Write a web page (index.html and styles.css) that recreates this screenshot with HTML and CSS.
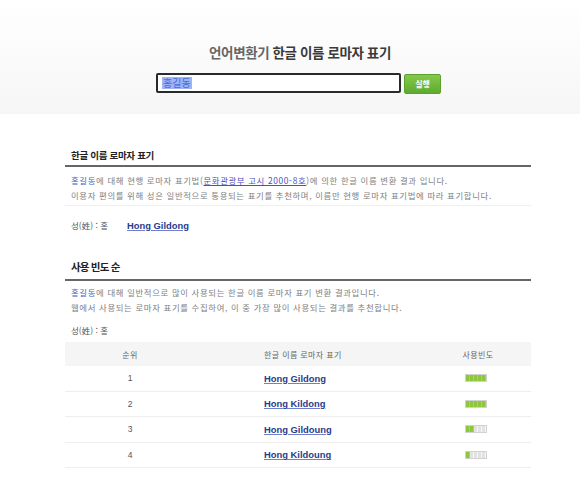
FILE: index.html
```
<!DOCTYPE html>
<html lang="ko">
<head>
<meta charset="utf-8">
<link rel="stylesheet" href="styles.css">
</head>
<body>
<div class="header">
  <div class="wrap">
    <h1 class="title"><span class="title-light">언어변환기</span> 한글 이름 로마자 표기</h1>
    <div class="form">
      <div class="input"><span class="sel">홍길동</span></div>
      <div class="btn">실행</div>
    </div>
  </div>
</div>

<div class="wrap">
  <div class="section s1">
    <h2 class="heading">한글 이름 로마자 표기</h2>
    <div class="para sep">
      <p><span class="hl">홍길동</span>에 대해 현행 로마자 표기법(<a class="ref" href="#">문화관광부 고시 2000-8호</a>)에 의한 한글 이름 변환 결과 입니다.</p>
      <p>이용자 편의를 위해 성은 일반적으로 통용되는 표기를 추천하며, 이름만 현행 로마자 표기법에 따라 표기합니다.</p>
    </div>
    <div class="result"><span class="surname">성(姓) : 홍</span><a class="rname" href="#">Hong Gildong</a></div>
  </div>

  <div class="section s2">
    <h2 class="heading heading2">사용 빈도 순</h2>
    <div class="para">
      <p><span class="hl">홍길동</span>에 대해 일반적으로 많이 사용되는 한글 이름 로마자 표기 변환 결과입니다.</p>
      <p>웹에서 사용되는 로마자 표기를 수집하여, 이 중 가장 많이 사용되는 결과를 추천합니다.</p>
    </div>
    <div class="result r2"><span class="surname">성(姓) : 홍</span></div>

    <div class="table">
      <div class="row thead">
        <div class="c1">순위</div>
        <div class="c2">한글 이름 로마자 표기</div>
        <div class="c3">사용빈도</div>
      </div>
      <div class="row">
        <div class="c1 num">1</div>
        <div class="c2"><a class="rname" href="#">Hong Gildong</a></div>
        <div class="c3"><div class="bar"><div class="fill" style="width:100%"></div></div></div>
      </div>
      <div class="row">
        <div class="c1 num">2</div>
        <div class="c2"><a class="rname" href="#">Hong Kildong</a></div>
        <div class="c3"><div class="bar"><div class="fill" style="width:100%"></div></div></div>
      </div>
      <div class="row">
        <div class="c1 num">3</div>
        <div class="c2"><a class="rname" href="#">Hong Gildoung</a></div>
        <div class="c3"><div class="bar"><div class="fill" style="width:40%"></div></div></div>
      </div>
      <div class="row">
        <div class="c1 num">4</div>
        <div class="c2"><a class="rname" href="#">Hong Kildoung</a></div>
        <div class="c3"><div class="bar"><div class="fill" style="width:20%"></div></div></div>
      </div>
    </div>
  </div>
</div>
</body>
</html>
```
FILE: styles.css
```
* { box-sizing: border-box; }
html, body { margin: 0; padding: 0; background: #fff; }
body {
  font-family: "Noto Sans CJK KR", "Noto Sans", sans-serif;
  color: #777;
}
p, h1, h2 { margin: 0; }

.wrap { width: 466px; margin-left: 65px; }

.header {
  height: 114px;
  background: linear-gradient(#ffffff, #f6f6f6);
  padding-top: 40px;
}
.title {
  text-align: center;
  font-size: 13.5px;
  line-height: 24px;
  font-weight: 700;
  letter-spacing: -0.4px;
  color: #3a3a3a;
  padding-left: 4px;
}
.title-light { color: #666; }
.form {
  margin-top: 9px;
  display: flex;
  justify-content: center;
  gap: 3px;
  padding-left: 1px;
}
.input {
  width: 245px;
  height: 20px;
  background: #fff;
  border: 2px solid #2a2a2a;
  border-radius: 2px;
  padding: 2px 0 0 4px;
  display: flex;
  align-items: flex-start;
}
.sel {
  background: #9db5f6;
  color: #4b69d8;
  font-size: 10px;
  line-height: 12px;
  padding: 0 1px;
}
.btn {
  width: 37px;
  height: 20px;
  margin-top: 1px;
  border-radius: 2px;
  background: linear-gradient(#86c84c, #5eab2f);
  border: 1px solid #5aa22e;
  color: #fff;
  font-size: 8px;
  font-weight: 700;
  line-height: 18px;
  text-align: center;
}

.s1 { margin-top: 34px; }
.heading {
  font-size: 9.5px;
  line-height: 14px;
  font-weight: 700;
  color: #222;
  letter-spacing: -0.3px;
  padding: 0 6px 3px;
  border-bottom: 2px solid #666;
}
.para {
  padding: 6px 6px 2px;
  font-size: 8.4px;
  line-height: 15px;
  letter-spacing: 0.65px;
  color: #808080;
}
.sep { border-bottom: 1px solid #f0f0f0; }
.hl { color: #3d63c9; }
.ref { color: #4b4fc0; text-decoration: underline; }
.result {
  margin-top: 12px;
  padding: 0 6px;
  font-size: 8.5px;
  line-height: 15px;
  color: #555;
  display: flex;
  align-items: center;
}
.surname { width: 56px; }
.rname {
  font-family: "Liberation Sans", Arial, sans-serif;
  font-weight: 700;
  font-size: 9.4px;
  color: #283c8c;
  text-decoration: underline;
  text-decoration-color: #7080cc;
  letter-spacing: 0;
}

.s2 { margin-top: 26px; }
.heading2 {
  font-size: 10.5px;
  line-height: 16px;
  letter-spacing: -0.8px;
  padding-bottom: 4px;
}
.s2 .para { padding-top: 4px; padding-bottom: 0; }
.r2 { margin-top: 8px; }

.table { margin-top: 4px; }
.row {
  display: grid;
  grid-template-columns: 130px 230px 106px;
  height: 25.5px;
  border-bottom: 1px solid #eeeeee;
  align-items: center;
  font-size: 8px;
  color: #555;
}
.row.thead {
  height: 24px;
  background: #f5f5f5;
  border-bottom: none;
  color: #666;
  letter-spacing: 0.4px;
}
.c1, .c3 { text-align: center; }
.c2 { padding-left: 69px; }
.num { font-family: "Liberation Sans", Arial, sans-serif; font-size: 8.5px; color: #555; }
.c3 { display: flex; justify-content: center; padding-right: 5px; }
.thead .c3 { padding-right: 0; }
.bar {
  width: 22px;
  height: 8px;
  border: 1px solid #d2d2d2;
  background: repeating-linear-gradient(to right, #e2e2e2 0 3.3px, #f7f7f7 3.3px 4px);
  overflow: hidden;
}
.fill {
  height: 100%;
  background: repeating-linear-gradient(to right, #8dc73c 0 3.3px, #a3d560 3.3px 4px);
}
```
